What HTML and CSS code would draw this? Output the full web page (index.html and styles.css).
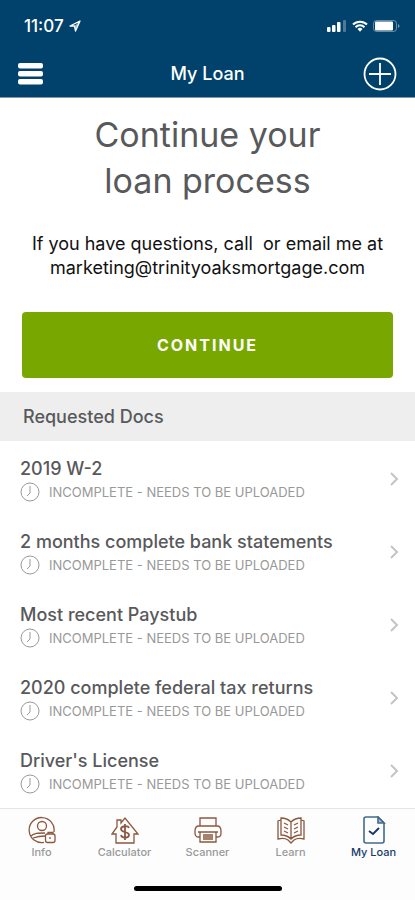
FILE: index.html
```html
<!DOCTYPE html>
<html lang="en">
<head>
  <meta charset="UTF-8">
  <meta name="viewport" content="width=device-width, initial-scale=1.0">
  <title>My Loan</title>
  <link rel="stylesheet" href="styles.css">
</head>
<body>
  <!-- shared icons -->
  <svg class="sprite" aria-hidden="true">
    <symbol id="clock" viewBox="0 0 20 20">
      <circle cx="10" cy="10" r="9"/>
      <path d="M10 4v7l-3 3"/>
    </symbol>
    <symbol id="chevron" viewBox="0 0 10 14">
      <path d="M2 1l6 6-6 6"/>
    </symbol>
  </svg>

  <header class="header">
    <div class="status-bar">
      <div class="status-time">
        <span>11:07</span>
        <svg width="12" height="12" viewBox="0 0 12 12"><path d="M11 1L1 6h4.500l1 5z" fill="none" stroke="#fff" stroke-width="1.300" stroke-linejoin="round"/><path d="M11 1L5.500 6l1 5z" fill="#fff" opacity=".6"/></svg>
      </div>
      <div class="status-icons">
        <svg width="20" height="12" viewBox="0 0 20 12" fill="#fff">
          <rect x="0" y="7" width="3.500" height="5" rx="1"/>
          <rect x="5" y="5" width="3.500" height="7" rx="1"/>
          <rect x="10" y="2" width="3.500" height="10" rx="1"/>
          <rect x="16" y="0" width="3" height="12" rx="1" opacity=".3"/>
        </svg>
        <svg width="16" height="12" viewBox="0 0 16 12" fill="none" stroke="#fff" stroke-width="2">
          <path d="M1 4.500a10 10 0 0 1 14 0M3.500 7.200a6.300 6.300 0 0 1 9 0"/>
          <path d="M5.500 9a3.700 3.700 0 0 1 5 0L8 11.800z" fill="#fff" stroke="none"/>
        </svg>
        <svg width="27" height="12" viewBox="0 0 27 12">
          <rect x=".5" y=".5" width="23" height="11" rx="3" fill="none" stroke="#fff" opacity=".4"/>
          <rect x="2" y="1.500" width="18" height="9" rx="1" fill="#fff"/>
          <path d="M25 4c2 1 2 3 0 4z" fill="#fff" opacity=".5"/>
        </svg>
      </div>
    </div>
    <div class="title-bar">
      <button class="icon-btn" aria-label="Menu">
        <svg width="25" height="22" viewBox="0 0 25 22" fill="#fff">
          <rect y="0" width="25" height="5.500" rx="2"/>
          <rect y="8" width="25" height="5.500" rx="2"/>
          <rect y="16" width="25" height="5.500" rx="2"/>
        </svg>
      </button>
      <h1 class="title">My Loan</h1>
      <button class="icon-btn icon-btn-add" aria-label="Add">
        <svg width="34" height="34" viewBox="0 0 34 34" fill="none" stroke="#fff" stroke-width="1.800">
          <circle cx="17" cy="17" r="15.500"/>
          <path d="M17 6v22M6 17h22"/>
        </svg>
      </button>
    </div>
  </header>

  <main>
    <section class="intro">
      <h2 class="intro-title">Continue your<br>loan process</h2>
      <p class="intro-text">If you have questions, call&nbsp; or email me at<br>marketing@trinityoaksmortgage.com</p>
      <button class="continue-btn">CONTINUE</button>
    </section>

    <h3 class="section-title">Requested Docs</h3>
    <ul class="docs">
      <li>
        <a href="#" class="doc">
          <span class="doc-info">
            <span class="doc-name">2019 W-2</span>
            <span class="doc-status"><svg class="clock"><use href="#clock"/></svg>INCOMPLETE - NEEDS TO BE UPLOADED</span>
          </span>
          <svg class="chevron"><use href="#chevron"/></svg>
        </a>
      </li>
      <li>
        <a href="#" class="doc">
          <span class="doc-info">
            <span class="doc-name">2 months complete bank statements</span>
            <span class="doc-status"><svg class="clock"><use href="#clock"/></svg>INCOMPLETE - NEEDS TO BE UPLOADED</span>
          </span>
          <svg class="chevron"><use href="#chevron"/></svg>
        </a>
      </li>
      <li>
        <a href="#" class="doc">
          <span class="doc-info">
            <span class="doc-name">Most recent Paystub</span>
            <span class="doc-status"><svg class="clock"><use href="#clock"/></svg>INCOMPLETE - NEEDS TO BE UPLOADED</span>
          </span>
          <svg class="chevron"><use href="#chevron"/></svg>
        </a>
      </li>
      <li>
        <a href="#" class="doc">
          <span class="doc-info">
            <span class="doc-name">2020 complete federal tax returns</span>
            <span class="doc-status"><svg class="clock"><use href="#clock"/></svg>INCOMPLETE - NEEDS TO BE UPLOADED</span>
          </span>
          <svg class="chevron"><use href="#chevron"/></svg>
        </a>
      </li>
      <li>
        <a href="#" class="doc">
          <span class="doc-info">
            <span class="doc-name">Driver's License</span>
            <span class="doc-status"><svg class="clock"><use href="#clock"/></svg>INCOMPLETE - NEEDS TO BE UPLOADED</span>
          </span>
          <svg class="chevron"><use href="#chevron"/></svg>
        </a>
      </li>
    </ul>
  </main>

  <footer class="footer">
    <nav class="tabs">
      <a href="#" class="tab">
        <svg class="tab-icon" viewBox="0 0 28 28">
          <path d="M16 26.300A12.500 12.500 0 1 1 26 16"/>
          <circle cx="14" cy="10" r="4.500"/>
          <path d="M3 20c3-3 7-3 14-3M5 22c3-1 7-2 12-2"/>
          <rect x="17.500" y="18" width="9.500" height="8.500" rx="2"/>
          <path d="M20 18v-1.500h5V18M22 21v2"/>
        </svg>
        Info
      </a>
      <a href="#" class="tab">
        <svg class="tab-icon" viewBox="0 0 28 28">
          <path d="M5 18v9h18v-9h4L14 2l-4 5V4H6v7l-5 7z"/>
          <path d="M18 12c-1-3-8-2-8 1 0 4 8 2 8 6 0 3-7 4-8 0M14 8v16" stroke-width="1.800"/>
        </svg>
        Calculator
      </a>
      <a href="#" class="tab">
        <svg class="tab-icon" viewBox="0 0 28 28">
          <path d="M6 10V2h16v8M6 21H4c-2 0-3-2-3-4v-2c0-3 1-5 4-5h18c3 0 4 2 4 5v2c0 2-1 4-3 4h-2"/>
          <path d="M6 16h16v10H6zM4 16h20M9 19h10M9 21h10M9 23h10"/>
        </svg>
        Scanner
      </a>
      <a href="#" class="tab">
        <svg class="tab-icon" viewBox="0 0 28 28">
          <path d="M14 6C11 3 7 2 4 2v17c4 0 7 1 10 4 3-3 6-4 10-4V2c-3 0-7 1-10 4zM14 6v17"/>
          <path d="M4 4L1 5v18c4-1 7-1 10 1l3 3 3-3c3-2 6-2 10-1V5l-3-1"/>
          <path d="M7 7l4 2M7 11l4 2M7 15l4 2M21 7l-4 2M21 11l-4 2M21 15l-4 2"/>
        </svg>
        Learn
      </a>
      <a href="#" class="tab active">
        <svg class="tab-icon" viewBox="0 0 28 28">
          <path d="M6 1h12l6 6v18c0 1-1 2-2 2H6c-1 0-2-1-2-2V3c0-1 1-2 2-2z"/>
          <path d="M18 1v6h6z" class="fold"/>
          <path d="M9 15l4 3 6-6" class="check"/>
        </svg>
        My Loan
      </a>
    </nav>
    <div class="home-indicator"></div>
  </footer>
</body>
</html>
```
FILE: styles.css
```css
* {
  margin: 0;
  padding: 0;
  box-sizing: border-box;
}

body {
  min-height: 100vh;
  display: flex;
  flex-direction: column;
  font-family: Inter, 'Liberation Sans', sans-serif;
  background: #fff;
  color: #58595b;
}

a {
  color: inherit;
  text-decoration: none;
}

button {
  border: none;
  font-family: inherit;
  cursor: pointer;
}

.sprite {
  display: none;
}

.header {
  background: #00426b;
  border-bottom: 1px solid #8794a8;
  color: #fff;
}

.status-bar {
  height: 50px;
  padding: 2px 15px 0 24px;
  display: flex;
  align-items: center;
  justify-content: space-between;
}

.status-time,
.status-icons {
  display: flex;
  align-items: center;
  gap: 5px;
}

.status-time {
  font-size: 17px;
  font-weight: 500;
}

.title-bar {
  height: 47px;
  padding: 0 18px;
  display: grid;
  grid-template-columns: 1fr auto 1fr;
  align-items: center;
}

.title {
  font-size: 18px;
  font-weight: 500;
}

.icon-btn {
  display: flex;
  justify-self: start;
  background: none;
}

.icon-btn-add {
  justify-self: end;
}

.intro {
  padding: 14px 22px;
  text-align: center;
}

.intro-title {
  font-size: 34px;
  font-weight: 400;
  line-height: 46px;
}

.intro-text {
  margin: 28px 0 32px;
  font-size: 18px;
  line-height: 24px;
  color: #111;
}

.continue-btn {
  width: 100%;
  height: 66px;
  border-radius: 4px;
  background: #78a800;
  color: #fff;
  font-size: 16px;
  font-weight: 700;
  letter-spacing: 2px;
}

.section-title {
  padding: 0 23px;
  background: #eee;
  font-size: 18px;
  font-weight: 500;
  line-height: 49px;
}

.docs {
  list-style: none;
}

.doc {
  height: 73px;
  padding: 3px 16px 0 20px;
  display: flex;
  align-items: center;
  justify-content: space-between;
}

.doc-name {
  display: block;
  font-size: 18px;
  font-weight: 500;
  line-height: 25px;
}

.doc-status {
  display: flex;
  align-items: center;
  gap: 9px;
  font-size: 13px;
  font-weight: 400;
  line-height: 22px;
  color: #999;
}

.clock {
  width: 20px;
  height: 20px;
  fill: none;
  stroke: #999;
}

.chevron {
  width: 10px;
  height: 14px;
  fill: none;
  stroke: #c4c4c4;
  stroke-width: 2;
}

.footer {
  margin-top: auto;
  border-top: 1px solid #e4e4e4;
  background: #fdfdfd;
}

.tabs {
  padding-top: 7px;
  display: grid;
  grid-template-columns: repeat(5, 1fr);
}

.tab {
  display: flex;
  flex-direction: column;
  align-items: center;
  gap: 1px;
  font-size: 11px;
  font-weight: 500;
  line-height: 14px;
  color: #999;
}

.tab-icon {
  width: 28px;
  height: 28px;
  fill: none;
  stroke: #8b583f;
  stroke-width: 1.3;
}

.tab.active {
  color: #173b6c;
}

.active .tab-icon {
  stroke: #416b8e;
  stroke-width: 1.6;
}

.active .fold {
  fill: #a9bdce;
}

.active .check {
  stroke: #173b6c;
  stroke-width: 2;
}

.home-indicator {
  width: 148px;
  height: 5px;
  margin: 27px auto 9px;
  border-radius: 3px;
  background: #000;
}
```
